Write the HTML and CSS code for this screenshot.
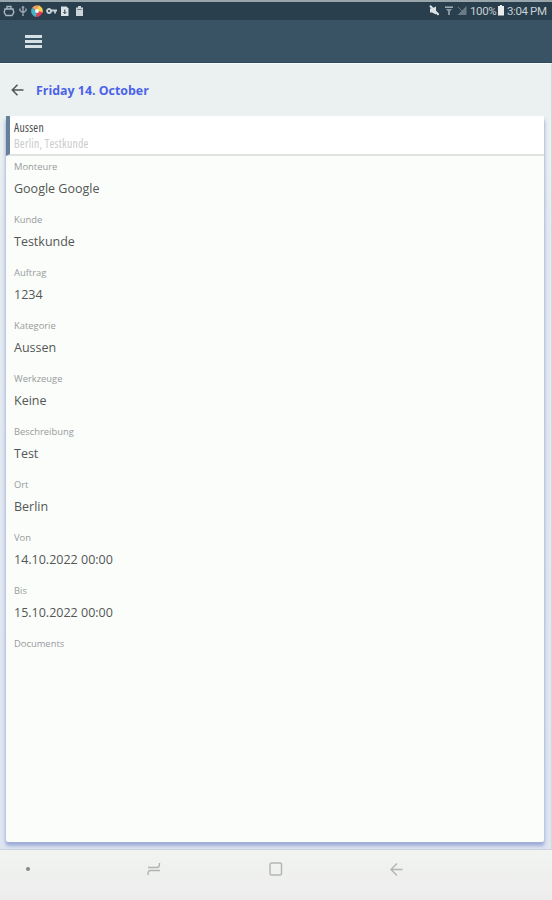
FILE: index.html
```
<!DOCTYPE html>
<html lang="de">
<head>
  <meta charset="UTF-8">
  <title>Friday 14. October</title>
  <meta name="viewport" content="width=device-width,initial-scale=1.0">
  <link rel="stylesheet" href="styles.css">
</head>
<body>
  <div class="screen">
    <div class="status-bar">
      <div class="status-icons">
        <svg width="12" height="12" viewBox="0 0 12 12" fill="none" stroke="#a9b7bf" stroke-width="1.4"><path d="M2 4h8l.8 3.500L9 10.500H3L1.200 7.500zM4 4V1.500h4V4"/></svg>
        <svg width="10" height="12" viewBox="0 0 10 12" fill="none" stroke="#93a4ad" stroke-width="1.5"><path d="M5 1v10M2 3.500v2L5 8l3-2.500v-2M3.700 2.500h2.600"/></svg>
        <svg width="12" height="12" viewBox="0 0 12 12"><path d="M6 6L1 3A6 6 0 0 1 9 1z" fill="#f0a064"/><path d="M6 6L8 .5A6 6 0 0 1 11.500 8z" fill="#f5d44b"/><path d="M6 6l5.500 1A6 6 0 0 1 4 11.600z" fill="#e23b52"/><path d="M6 6l-1 6A6 6 0 0 1 1 3z" fill="#45b3c6"/><circle cx="6" cy="6" r="2" fill="#f4f4f4"/></svg>
        <svg width="12" height="12" viewBox="0 0 12 12" fill="none" stroke="#c6d0d5" stroke-width="1.800"><circle cx="3" cy="6" r="2"/><path d="M5 5.500h6M9 5.500v3"/></svg>
        <svg width="9" height="12" viewBox="0 0 9 12"><path d="M0 1.500h5.500l2 2v7.500H0z" fill="#dbe2e5"/><path d="M3.800 4.500v4M2.300 7l1.500 1.500L5.300 7" stroke="#2c414f" fill="none"/></svg>
        <svg width="9" height="12" viewBox="0 0 9 12"><path d="M2 1h3v1.500h2V11H0V2.500h2z" fill="#cbd4d8"/><path d="M1 4.500h5" stroke="#72848e"/></svg>
      </div>
      <div class="status-info">
        <svg width="10" height="11" viewBox="0 0 10 11"><path d="M1 3.500h2l4-2v8L3 7.500H1z" fill="#dce3e6"/><path d="M1 .8l8.500 9" stroke="#dce3e6" stroke-width="2"/></svg>
        <svg class="wifi" width="10" height="11" viewBox="0 0 10 11"><path d="M2 4h6L6 6.500v3.500H4V6.500z" fill="#84959f"/><path d="M1 2.200h8" stroke="#a4b1b8" stroke-width="1.500"/></svg>
        <svg class="signal" width="10" height="11" viewBox="0 0 10 11"><path d="M9.500 1v9H.5z" fill="#697b86"/><path d="M1 2l4 4" stroke="#697b86"/></svg>
        <span class="percent">100%</span>
        <svg width="6" height="11" viewBox="0 0 6 11"><path d="M2 0h2v1h2v9.500H0V1h2z" fill="#e8ecee"/></svg>
        <span class="clock">3:04 PM</span>
      </div>
    </div>

    <div class="app-bar">
      <div class="menu-btn"><span></span><span></span><span></span></div>
    </div>

    <div class="content">
      <div class="page-head">
        <svg width="13" height="12" viewBox="0 0 13 12" fill="none" stroke="#4c5558" stroke-width="1.500"><path d="M12.500 6H1.500M6.500 .8L1.300 6l5.200 5.200"/></svg>
        <h1>Friday 14. October</h1>
      </div>

      <div class="card">
        <div class="card-head">
          <div class="card-title">Aussen</div>
          <div class="card-sub">Berlin, Testkunde</div>
        </div>
        <div class="fields">
          <div class="field"><label>Monteure</label><p>Google Google</p></div>
          <div class="field"><label>Kunde</label><p>Testkunde</p></div>
          <div class="field"><label>Auftrag</label><p>1234</p></div>
          <div class="field"><label>Kategorie</label><p>Aussen</p></div>
          <div class="field"><label>Werkzeuge</label><p>Keine</p></div>
          <div class="field"><label>Beschreibung</label><p>Test</p></div>
          <div class="field"><label>Ort</label><p>Berlin</p></div>
          <div class="field"><label>Von</label><p>14.10.2022 00:00</p></div>
          <div class="field"><label>Bis</label><p>15.10.2022 00:00</p></div>
          <div class="field"><label>Documents</label></div>
        </div>
      </div>
    </div>

    <div class="nav-bar">
      <span class="nav-dot"></span>
      <svg class="nav-recents" width="14" height="14" viewBox="0 0 14 14" fill="none" stroke="#b0b3b1" stroke-width="1.500"><path d="M1 5.500h9.500q2 0 2-4.500M13 8.500H3q-2 0-2 4.500"/></svg>
      <svg class="nav-home" width="14" height="14" viewBox="0 0 14 14" fill="none" stroke="#b2b5b3" stroke-width="1.400"><rect x="1" y="1" width="11.500" height="12" rx="1.500"/></svg>
      <svg class="nav-back" width="13" height="13" viewBox="0 0 13 13" fill="none" stroke="#b2b5b3" stroke-width="1.400"><path d="M12.500 6.500H1.500M7 .5l-6 6 6 6"/></svg>
    </div>
  </div>
</body>
</html>
```
FILE: styles.css
```
* { box-sizing: border-box; }
body {
  margin: 0;
  font-family: "Open Sans", "Noto Sans", sans-serif;
}
.screen {
  width: 100%; height: 900px;
  display: flex; flex-direction: column;
  overflow: hidden;
  background: #ebf1f1;
}

/* Android status bar */
.status-bar {
  height: 20px; flex: none;
  display: flex; align-items: center; justify-content: space-between;
  padding: 0 6px 1px 3px;
  border-top: 2px solid #98a5aa;
  background: #2a3f4d;
}
.status-icons { display: flex; align-items: center; gap: 3px; }
.status-icons svg:nth-child(6) { margin-left: 3px; }
.status-info {
  display: flex; align-items: center;
  font-family: Roboto, sans-serif; font-size: 11.5px; line-height: 16px;
  color: #c6d0d5;
}
.wifi { margin-left: 5px; }
.signal { margin: 0 3px 0 3px; }
.percent { width: 28px; letter-spacing: -.4px; }
.clock { margin-left: 3px; width: 39px; letter-spacing: -.4px; white-space: nowrap; }

.app-bar {
  height: 43px; flex: none;
  display: flex; align-items: center;
  padding-left: 25px;
  background: #395365;
  border-bottom: 1px solid #2d4b60;
}
.menu-btn { display: flex; flex-direction: column; gap: 2px; }
.menu-btn span { width: 17px; height: 3px; background: #d4e0e4; }

.content {
  flex: 1; min-height: 0;
  display: flex; flex-direction: column;
  padding: 0 7px 7px 6px;
  border-right: 1px solid #d3d8d9;
  border-top: 1px solid #f7fbfb;
  background: linear-gradient(#ebf1f1 90px, #e5ebf0 150px, #dfe6f1);
}
.page-head {
  height: 52px; flex: none;
  display: flex; align-items: center; gap: 12px;
  padding-left: 5px;
}
.page-head h1 {
  margin: 0;
  font-size: 12.4px; font-weight: 700;
  color: #4c63e8;
}

.card {
  flex: 1;
  background: #fbfdfa;
  border-radius: 2px;
  box-shadow: 0 3px 3px #a0aed8, 0 4px 5px #b3bfdc;
  clip-path: inset(0 -6px -7px -6px);
}
.card-head {
  height: 40px;
  padding: 4px 0 0 4px;
  border-left: 4px solid #64809b;
  border-bottom: 2px solid #e1e4e3;
  background: #fff;
  font-size: 11.7px; line-height: 15.5px; font-stretch: 75%; letter-spacing: .27px;
}
.card-title { color: #4a4d4e; }
.card-sub { color: #c8cbcb; }
.fields { padding: 4px 8px; }
.field { height: 53px; }
.field label {
  display: block;
  font-size: 9.4px; line-height: 13px;
  color: #979b9a;
}
.field p {
  margin: 7px 0 0;
  font-size: 12.5px; line-height: 18px;
  color: #535756;
}

/* Soft keys */
.nav-bar {
  height: 51px; flex: none;
  display: flex; align-items: center;
  padding: 0 0 12px 26px;
  border-top: 1px solid #cdd2dc;
  background: linear-gradient(#f1f4f0, #ededed);
}
.nav-dot { width: 4px; height: 4px; border-radius: 50%; background: #858886; }
.nav-recents { margin-left: 117px; }
.nav-home { margin-left: 108px; }
.nav-back { margin-left: 107px; }
```
